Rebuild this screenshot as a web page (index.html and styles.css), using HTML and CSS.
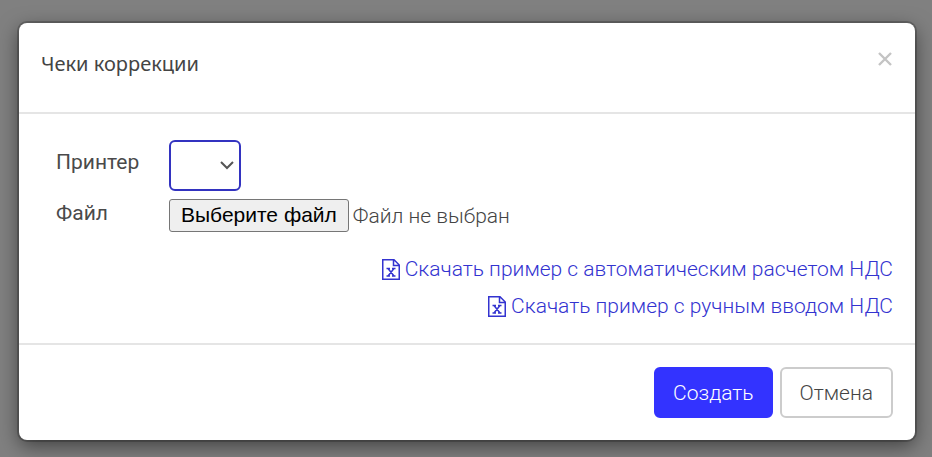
FILE: index.html
```html
<!DOCTYPE html>
<html lang="ru">
  <head>
    <meta charset="UTF-8">
    <meta name="viewport" content="width=device-width, initial-scale=1">
    <title>Чеки коррекции</title>
    <link rel="stylesheet" href="styles.css">
  </head>
  <body>
    <form class="modal" role="dialog" aria-labelledby="modal-title">
      <div class="modal-header">
        <h4 class="modal-title" id="modal-title">Чеки коррекции</h4>
        <button type="button" class="close" aria-label="Закрыть">
          <svg width="14" height="14" viewBox="0 0 14 14"><path stroke-width="2.400" d="M1 1l12 12M13 1L1 13"/></svg>
        </button>
      </div>
      <div class="modal-body">
        <div class="form-row">
          <label class="form-label" for="printer">Принтер</label>
          <div class="select-wrap">
            <select class="form-select" id="printer"></select>
            <svg class="select-arrow" width="14" height="9" viewBox="0 0 14 9"><path d="M1 1l6 6 6-6"/></svg>
          </div>
        </div>
        <div class="form-row">
          <label class="form-label" for="file">Файл</label>
          <div class="file">
            <input type="file" class="file-input" id="file" tabindex="-1">
            <button type="button" class="file-btn" id="file-btn">Выберите файл</button>
            <span class="file-name" id="file-name">Файл не выбран</span>
          </div>
        </div>
        <div class="links">
          <a href="#">
            <svg class="icon" width="18" height="21" viewBox="0 0 18 21"><path d="M.75.75H12l5.250 5.250v14.250H.75zM11.500 1v5.500H17"/><path d="M6 9.500l6 7.500M12 9.500L6 17M4.500 9.500h3.500M10 9.500h3.500M4.500 17H8M10 17h3.500"/></svg>
            Скачать пример с автоматическим расчетом НДС
          </a>
          <a href="#">
            <svg class="icon" width="18" height="21" viewBox="0 0 18 21"><path d="M.75.75H12l5.250 5.250v14.250H.75zM11.500 1v5.500H17"/><path d="M6 9.500l6 7.500M12 9.500L6 17M4.500 9.500h3.500M10 9.500h3.500M4.500 17H8M10 17h3.500"/></svg>
            Скачать пример с ручным вводом НДС
          </a>
        </div>
      </div>
      <div class="modal-footer">
        <button type="submit" class="btn btn-primary">Создать</button>
        <button type="button" class="btn btn-default">Отмена</button>
      </div>
    </form>
    <script>
      var fileInput = document.getElementById("file");
      var fileName = document.getElementById("file-name");

      document.getElementById("file-btn").addEventListener("click", function() {
        fileInput.click();
      });
      fileInput.addEventListener("change", function() {
        fileName.textContent = fileInput.files.length ? fileInput.files[0].name : "Файл не выбран";
      });
    </script>
  </body>
</html>
```

FILE: styles.css
```css
* {
  box-sizing: border-box;
}
body {
  margin: 0;
  padding: 23px 17px 17px 19px;
  background: #808080;
  color: #444;
  font-family: Roboto, "Liberation Sans", sans-serif;
  font-size: 21px;
  font-weight: 300;
  line-height: 30px;
}
svg {
  fill: none;
  stroke: currentColor;
  stroke-width: 2;
}
.modal {
  background: #fff;
  border-radius: 8px;
  box-shadow: 0 0 0 2px rgba(0, 0, 0, 0.2), 0 6px 20px rgba(0, 0, 0, 0.5);
}
.modal-header {
  display: flex;
  justify-content: space-between;
  align-items: flex-start;
  padding: 26px 23px 33px 22px;
  border-bottom: 2px solid #e5e5e5;
}
.modal-title {
  margin: 0;
  font-family: "Noto Sans", sans-serif;
  font-size: 20px;
  font-weight: 400;
}
.close {
  display: flex;
  padding: 3px 0;
  border: 0;
  background: none;
  color: #c4c4c4;
  cursor: pointer;
}
.modal-body {
  padding: 26px 22px 22px;
}
.form-row {
  display: flex;
  align-items: flex-start;
  margin-bottom: 8px;
  padding-left: 15px;
}
.form-label {
  width: 113px;
  padding-top: 6px;
  line-height: 32px;
  font-weight: 400;
  color: #4a4a4a;
}
.form-row + .form-row .form-label {
  padding-top: 0;
  line-height: 28px;
}
.select-wrap {
  position: relative;
}
.form-select {
  display: block;
  width: 72px;
  height: 51px;
  border: 2px solid #3333c0;
  border-radius: 6px;
  background: #fff;
  font: inherit;
  appearance: none;
  outline: none;
}
.select-arrow {
  position: absolute;
  right: 7px;
  top: 21px;
  color: #555;
  pointer-events: none;
}
.file {
  display: flex;
  align-items: center;
  gap: 4px;
}
.file-input {
  position: absolute;
  width: 1px;
  height: 1px;
  opacity: 0;
}
.file-btn {
  height: 33px;
  padding: 0 11px 2px;
  border: 1px solid #767676;
  border-radius: 3px;
  background: #efefef;
  color: #000;
  font-family: "Liberation Sans", Arial, sans-serif;
  font-size: 21px;
}
.links {
  display: flex;
  flex-direction: column;
  align-items: flex-end;
  gap: 7px;
  padding-top: 14px;
}
.links a {
  display: flex;
  align-items: center;
  gap: 5px;
  color: #3333d0;
  text-decoration: none;
}
.icon {
  stroke-width: 1.5;
}
.modal-footer {
  display: flex;
  justify-content: flex-end;
  gap: 7px;
  padding: 22px;
  border-top: 2px solid #e5e5e5;
}
.btn {
  height: 51px;
  padding: 0 18px;
  border: 2px solid #ccc;
  border-radius: 6px;
  background: #fff;
  color: #444;
  font: inherit;
  cursor: pointer;
}
.btn-primary {
  padding: 0 17px;
  border-color: #33f;
  background: #33f;
  color: #fff;
}
```
